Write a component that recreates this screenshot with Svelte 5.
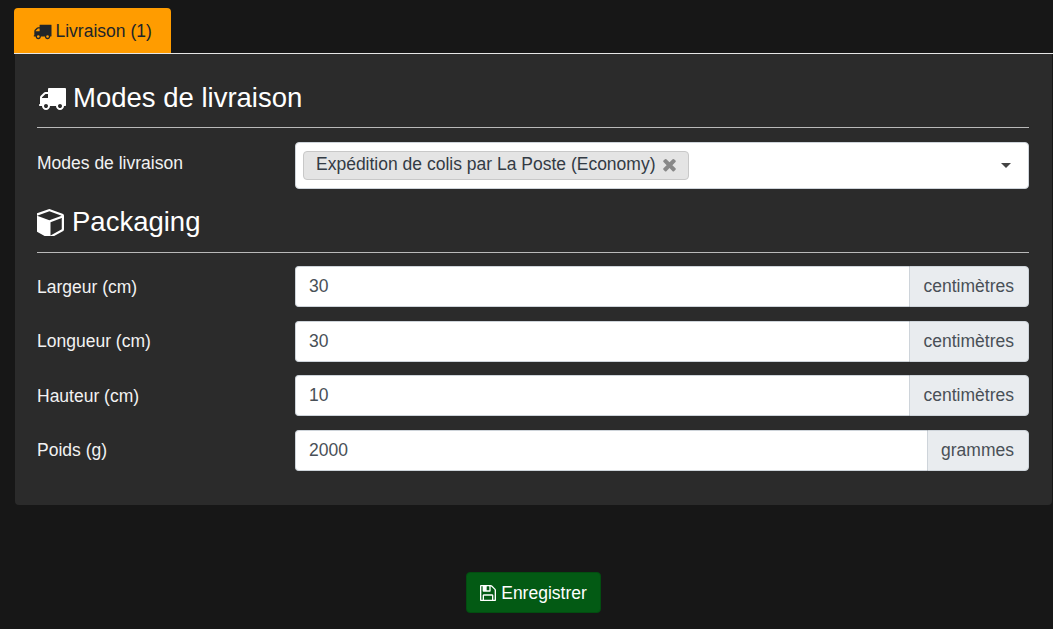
<script>
  const fields = [
    { label: 'Largeur (cm)', value: '30', unit: 'centimètres' },
    { label: 'Longueur (cm)', value: '30', unit: 'centimètres' },
    { label: 'Hauteur (cm)', value: '10', unit: 'centimètres' },
    { label: 'Poids (g)', value: '2000', unit: 'grammes' }
  ];
  const truck = 'M640 1408q0-52-38-90t-90-38-90 38-38 90 38 90 90 38 90-38 38-90zm-384-512h384v-256h-158q-13 0-22 9l-195 195q-9 9-9 22v30zm1280 512q0-52-38-90t-90-38-90 38-38 90 38 90 90 38 90-38 38-90zm256-1088v1024q0 15-4 26.5t-13.5 18.5-16.5 11.5-23.5 6-22.5 2-25.5 0-22.5-.5q0 106-75 181t-181 75-181-75-75-181h-384q0 106-75 181t-181 75-181-75-75-181h-64q-3 0-22.5.5t-25.5 0-22.5-2-23.5-6-16.5-11.5-13.5-18.5-4-26.5q0-26 19-45t45-19v-320q0-8-.5-35t0-38 2.5-34.5 6.5-37 14-30.5 22.5-30l198-198q19-19 50.5-32t58.5-13h160v-192q0-26 19-45t45-19h1024q26 0 45 19t19 45z';
</script>

<div class="page">
  <ul class="tabs">
    <li class="tab">
      <svg class="ico-tab" viewBox="0 0 1792 1792"><path d={truck} /></svg>
      Livraison (1)
    </li>
  </ul>

  <div class="panel">
    <h4>
      <svg class="ico-h" viewBox="0 0 1792 1792"><path d={truck} /></svg>
      Modes de livraison
    </h4>
    <hr class="first-rule" />
    <div class="row select-row">
      <label for="modes">Modes de livraison</label>
      <div class="select" id="modes">
        <span class="chip">
          Expédition de colis par La Poste (Economy)
          <svg class="x" viewBox="0 0 1792 1792"><path d="M1490 1322q0 40-28 68l-136 136q-28 28-68 28t-68-28l-294-294-294 294q-28 28-68 28t-68-28l-136-136q-28-28-28-68t28-68l294-294-294-294q-28-28-28-68t28-68l136-136q28-28 68-28t68 28l294 294 294-294q28-28 68-28t68 28l136 136q28 28 28 68t-28 68l-294 294 294 294q28 28 28 68z" /></svg>
        </span>
        <span class="caret"></span>
      </div>
    </div>

    <h4 class="second">
      <svg class="ico-cube" viewBox="128 128 1536 1536"><path d="M896 1629l640-349v-636l-640 233v752zm-64-864l698-254-698-254-698 254zm832-252v768q0 35-18 65t-50 48l-704 384q-28 16-61 16t-61-16l-704-384q-32-18-50-48t-18-65v-768q0-40 23-73t61-47l704-256q22-8 44-8t44 8l704 256q38 14 61 47t23 73z" /></svg>
      Packaging
    </h4>
    <hr class="second-rule" />
    {#each fields as f}
      <div class="row">
        <label for={f.label}>{f.label}</label>
        <div class="group">
          <input id={f.label} type="text" value={f.value} />
          <span class="unit">{f.unit}</span>
        </div>
      </div>
    {/each}
  </div>

  <div class="actions">
    <button type="button">
      <svg class="ico-save" viewBox="128 128 1536 1536"><path d="M512 1536h768v-384h-768v384zm896 0h128v-896q0-14-10-38.5t-20-34.5l-281-281q-10-10-34-20t-39-10v416q0 40-28 68t-68 28h-576q-40 0-68-28t-28-68v-416h-128v1280h128v-416q0-40 28-68t68-28h832q40 0 68 28t28 68v416zm-384-928v-320q0-13-9.5-22.5t-22.5-9.5h-192q-13 0-22.5 9.5t-9.5 22.5v320q0 13 9.5 22.5t22.5 9.5h192q13 0 22.5-9.5t9.5-22.5zm640 32v928q0 40-28 68t-68 28h-1344q-40 0-68-28t-28-68v-1344q0-40 28-68t68-28h928q40 0 88 20t76 48l280 280q28 28 48 76t20 88z" /></svg>
      Enregistrer
    </button>
  </div>
</div>

<style>
  :global(body) {
    background: #171717;
    font-family: "Liberation Sans", Arial, sans-serif;
    font-size: 17.5px;
    line-height: 1.5;
    color: #fff;
  }

  .page {
    padding: 8px 0 0 14px;
    height: 621px;
    overflow: hidden;
  }

  .tabs {
    display: flex;
    list-style: none;
    margin: 0;
    padding: 0;
    border-bottom: 1px solid #e6e6e6;
  }

  .tab {
    display: flex;
    align-items: center;
    gap: 4px;
    height: 45px;
    padding: 1px 19px 0 19px;
    box-sizing: border-box;
    background: #ff9c00;
    color: #212529;
    border-radius: 4px 4px 0 0;
  }

  .ico-tab {
    width: 18.5px;
    height: 18.5px;
    fill: #212529;
  }

  .panel {
    background: #2b2b2b;
    margin-left: 1px;
    margin-right: 1px;
    padding: 25px 23.5px 21px 22px;
    border-radius: 0 0 4px 4px;
  }

  h4 {
    display: flex;
    align-items: center;
    gap: 7px;
    margin: 0;
    font-size: 27.5px;
    font-weight: 400;
    line-height: 38px;
    color: #fff;
  }

  .ico-h {
    width: 28px;
    height: 28px;
    fill: #fff;
    margin-left: 1px;
  }

  .ico-cube {
    width: 27px;
    height: 27px;
    fill: #fff;
    margin-right: 1px;
  }

  .second {
    margin-top: 14px;
  }

  hr {
    border: 0;
    border-top: 1px solid #b9b9b9;
    margin: 11px 0 14px;
  }

  .first-rule {
    margin-top: 10px;
  }

  .second-rule {
    margin-bottom: 13px;
  }

  .row {
    display: flex;
    margin-bottom: 13.5px;
    height: 41px;
  }

  .select-row {
    height: 47px;
    margin-bottom: 0;
  }

  label {
    flex: 0 0 258px;
    padding-top: 7.5px;
    color: #f2f2f2;
  }

  .select {
    flex: 1;
    display: flex;
    align-items: center;
    justify-content: space-between;
    background: #fff;
    border: 1px solid #ced4da;
    border-radius: 4px;
    padding: 0 17px 0 7px;
  }

  .chip {
    display: flex;
    align-items: center;
    gap: 5px;
    box-sizing: border-box;
    height: 29px;
    padding: 0 9px 1px 12px;
    margin-top: -1px;
    background: #e4e4e4;
    border: 1px solid #c8c8c8;
    border-radius: 4px;
    color: #333b44;
  }

  .x {
    width: 19px;
    height: 19px;
    fill: #888;
  }

  .caret {
    width: 0;
    height: 0;
    border-left: 5px solid transparent;
    border-right: 5px solid transparent;
    border-top: 5px solid #444;
  }

  .group {
    flex: 1;
    display: flex;
  }

  input {
    flex: 1;
    min-width: 0;
    box-sizing: border-box;
    height: 100%;
    margin: 0;
    padding: 0 13px;
    font: inherit;
    color: #495057;
    background: #fff;
    border: 1px solid #ced4da;
    border-right: 0;
    border-radius: 4px 0 0 4px;
    outline: none;
  }

  .unit {
    display: flex;
    align-items: center;
    padding: 0 13.5px;
    background: #e9ecef;
    border: 1px solid #ced4da;
    border-radius: 0 4px 4px 0;
    color: #495057;
  }

  .actions {
    display: flex;
    justify-content: center;
    margin-top: 67px;
  }

  button {
    display: flex;
    align-items: center;
    gap: 5px;
    height: 41px;
    padding: 1px 13px 0;
    font: inherit;
    color: #fff;
    background: #035a14;
    border: 1px solid #024d10;
    border-radius: 4px;
  }

  .ico-save {
    width: 16px;
    height: 16px;
    fill: #fff;
  }
</style>
